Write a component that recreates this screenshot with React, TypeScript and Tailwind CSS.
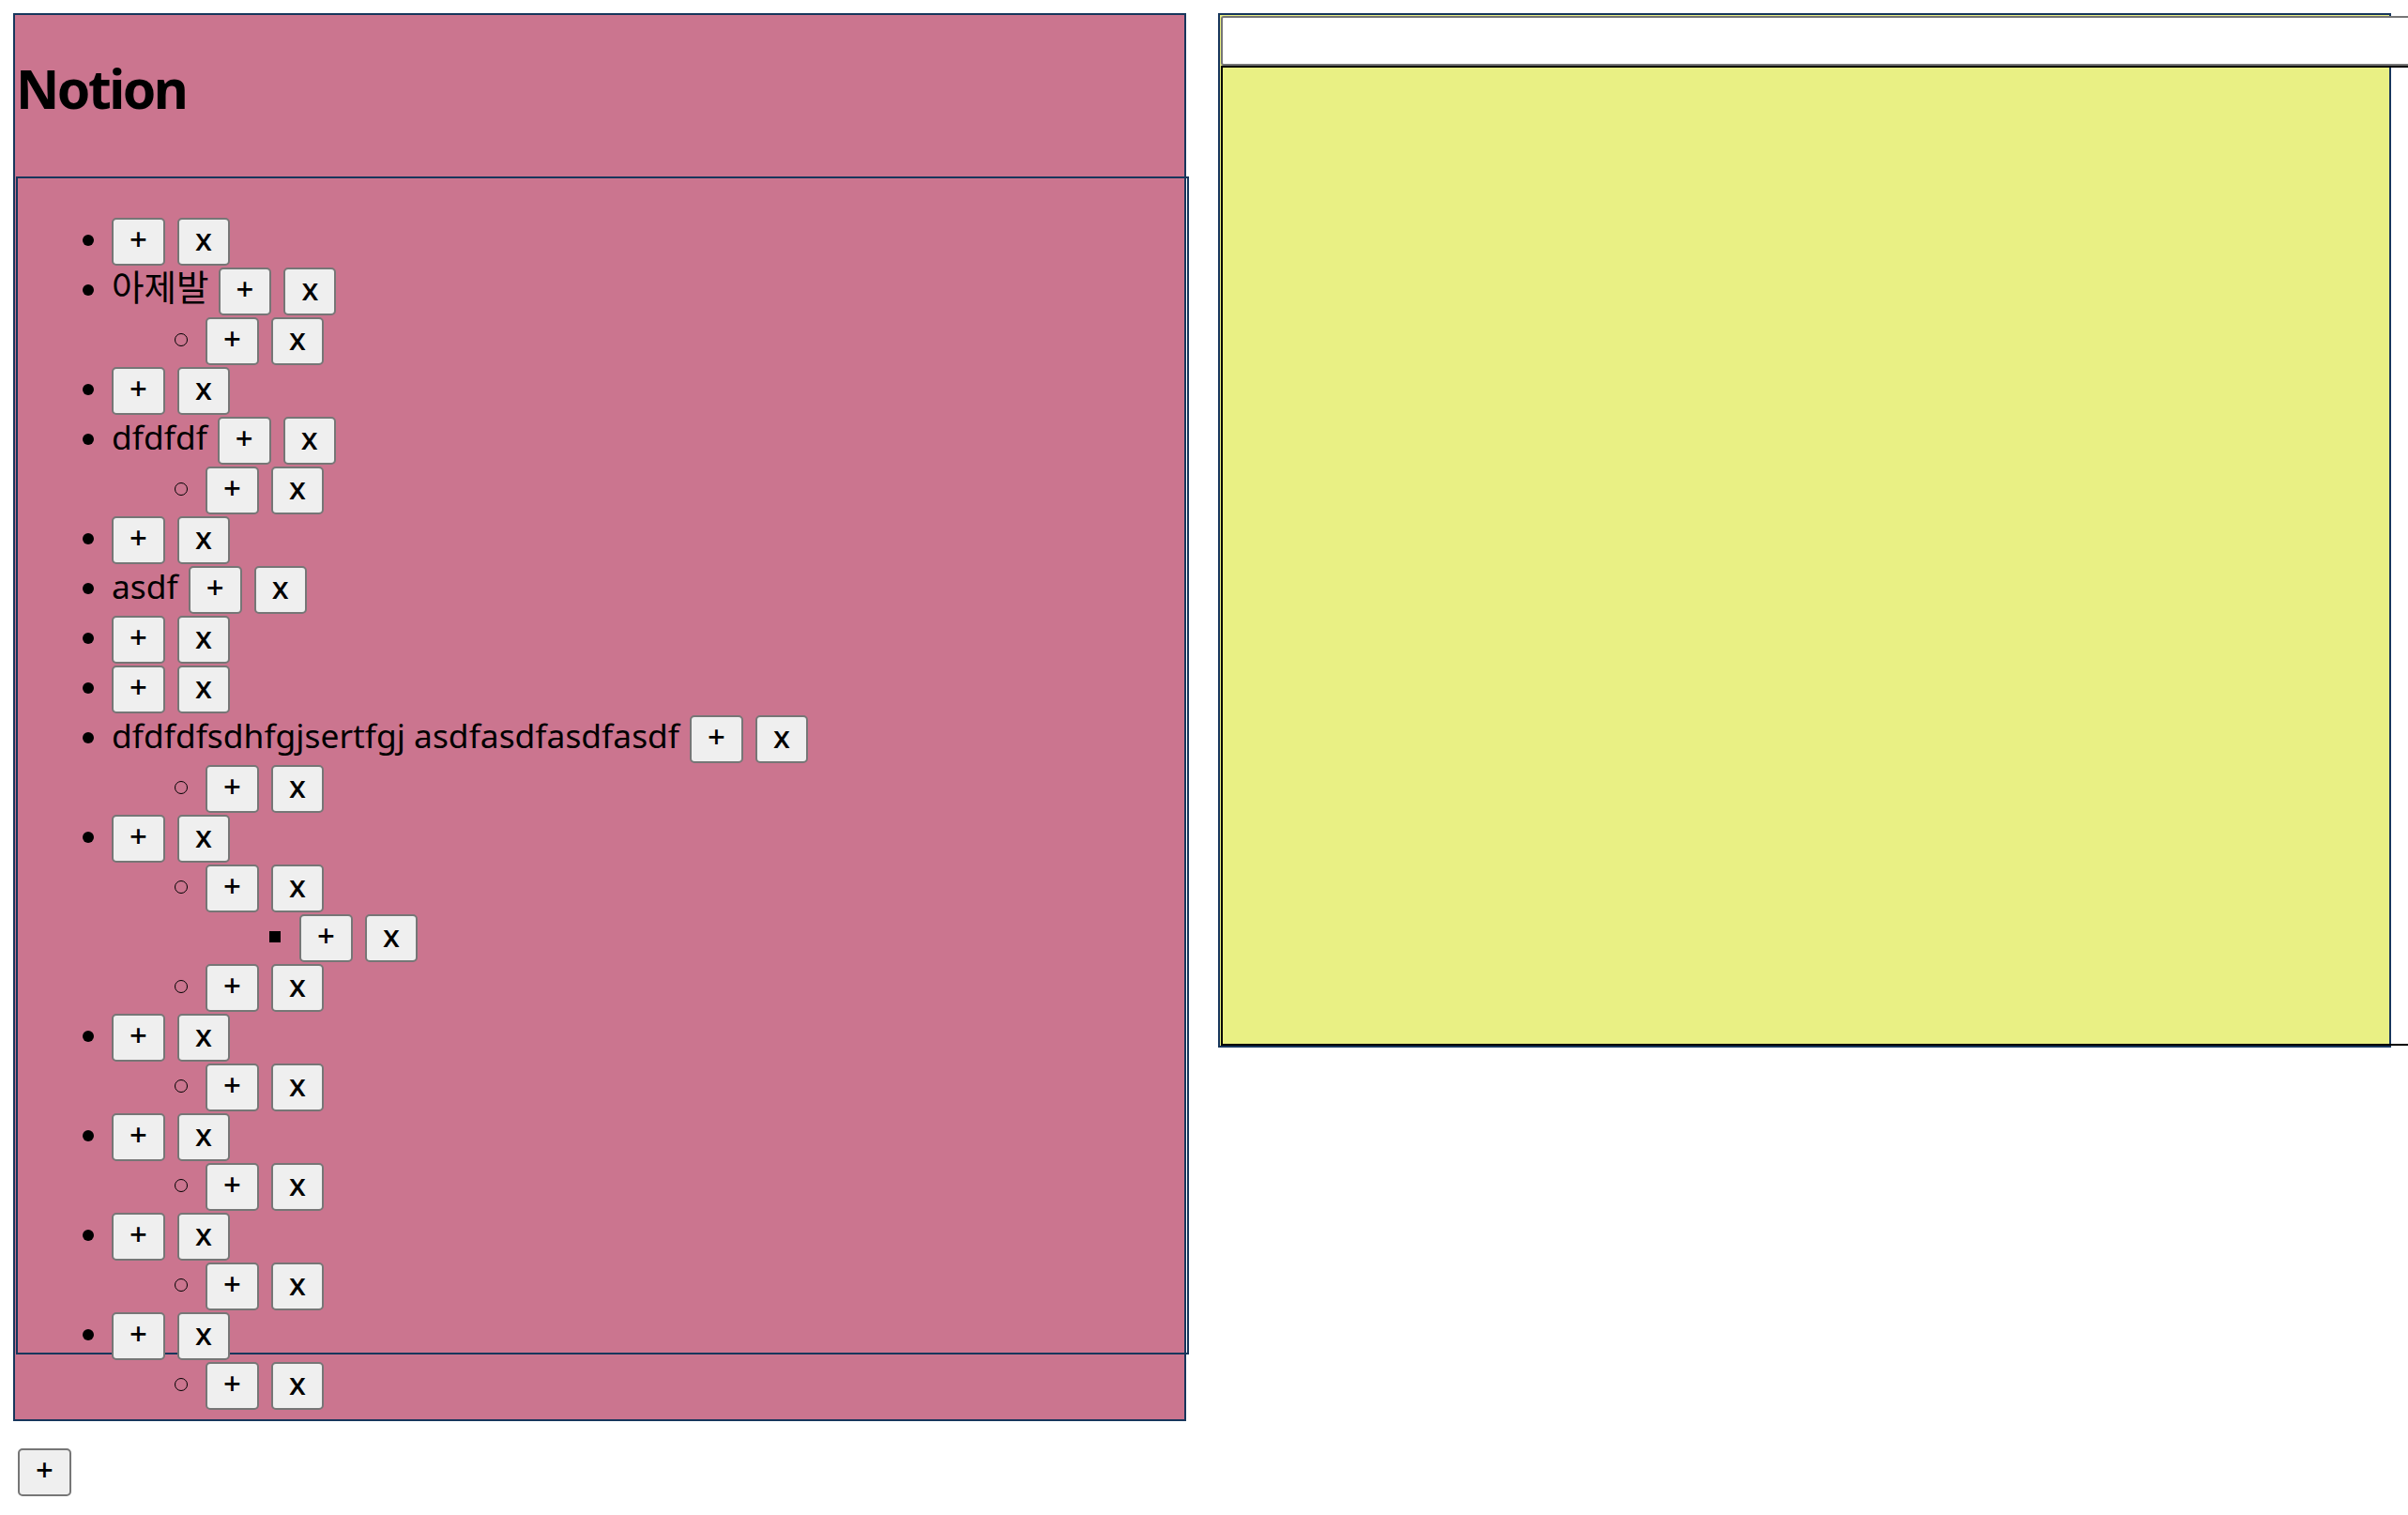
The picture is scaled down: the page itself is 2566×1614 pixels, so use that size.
import { useState } from "react";

type Page = {
  id: number;
  title: string;
  children: Page[];
};

let nextId = 0;
const page = (title = "", children: Page[] = []): Page => ({
  id: ++nextId,
  title,
  children,
});

const initialPages: Page[] = [
  page(),
  page("아제발", [page()]),
  page(),
  page("dfdfdf", [page()]),
  page(),
  page("asdf"),
  page(),
  page(),
  page("dfdfdfsdhfgjsertfgj asdfasdfasdfasdf", [page()]),
  page("", [page("", [page()]), page()]),
  page("", [page()]),
  page("", [page()]),
  page("", [page()]),
  page("", [page()]),
];

// disc / circle / square, like the default ul markers
const markers = [
  "mt-[18px] -ml-[31px] mr-[19px] h-[12px] w-[12px] rounded-full bg-black",
  "mt-[17px] -ml-[33px] mr-[19px] h-[14px] w-[14px] rounded-full border-[1.5px] border-black",
  "mt-[18px] -ml-[32px] mr-[20px] h-[12px] w-[12px] bg-black",
];

const btn =
  "h-[51px] shrink-0 rounded-[5px] border-2 border-[#767676] bg-[#efefef] px-[17px] pb-[5px] text-[33px] font-medium leading-[42px] text-black";

// hangul glyphs come out a bit small next to the latin ones
const isHangul = (s: string) => /[가-힣]/.test(s);

function addChild(list: Page[], id: number): Page[] {
  return list.map((p) =>
    p.id === id
      ? { ...p, children: [...p.children, page()] }
      : { ...p, children: addChild(p.children, id) },
  );
}

function removePage(list: Page[], id: number): Page[] {
  return list
    .filter((p) => p.id !== id)
    .map((p) => ({ ...p, children: removePage(p.children, id) }));
}

function PageList({
  pages,
  depth,
  onAdd,
  onDelete,
}: {
  pages: Page[];
  depth: number;
  onAdd: (id: number) => void;
  onDelete: (id: number) => void;
}) {
  return (
    <ul className="pl-[100px]">
      {pages.map((item) => (
        <li key={item.id}>
          <div className="flex h-[53px] items-baseline">
            <span className={`shrink-0 self-start ${markers[depth % 3]}`} />
            {item.title && (
              <span
                className={`whitespace-nowrap leading-none ${
                  isHangul(item.title)
                    ? "mr-[10px] text-[37.5px]"
                    : "mr-[11px] text-[35.4px]"
                }`}
              >
                {item.title}
              </span>
            )}
            <button onClick={() => onAdd(item.id)} className={btn}>
              +
            </button>
            <button
              onClick={() => onDelete(item.id)}
              className={`ml-[13px] ${btn}`}
            >
              x
            </button>
          </div>
          {item.children.length > 0 && (
            <PageList
              pages={item.children}
              depth={depth + 1}
              onAdd={onAdd}
              onDelete={onDelete}
            />
          )}
        </li>
      ))}
    </ul>
  );
}

export default function App() {
  const [pages, setPages] = useState<Page[]>(initialPages);
  const [content, setContent] = useState("");

  const handleAdd = (id: number) => setPages((prev) => addChild(prev, id));
  const handleDelete = (id: number) =>
    setPages((prev) => removePage(prev, id));

  return (
    <div className="flex min-h-screen items-start gap-[34px] overflow-hidden bg-white p-[14px] font-['Noto_Sans','Noto_Sans_CJK_KR',sans-serif] text-black">
      {/* sidebar */}
      <div className="shrink-0">
        <div className="h-[1500px] w-[1250px] border-2 border-[#17365c] bg-[#cb758f] pl-[1px] pt-[1px]">
          <div className="h-[171px] pt-[49px]">
            <h1 className="text-[57px] font-bold leading-none tracking-[-2.5px]">
              Notion
            </h1>
          </div>

          <div className="h-[1255px] w-[1250px] border-2 border-[#17365c] pt-[42px]">
            <PageList
              pages={pages}
              depth={0}
              onAdd={handleAdd}
              onDelete={handleDelete}
            />
          </div>
        </div>

        <button
          onClick={() => setPages((prev) => [...prev, page()])}
          className={`ml-[5px] mt-[29px] ${btn}`}
        >
          +
        </button>
      </div>

      {/* editor */}
      <div className="h-[1102px] w-[1250px] shrink-0 border-2 border-[#17365c] bg-[#e9f084] pl-[1px] pt-[1px]">
        <input
          value={content}
          onChange={(e) => setContent(e.target.value)}
          className="block h-[53px] w-[1300px] rounded-[3px] border-2 border-[#767676] bg-white px-2 text-[33px]"
        />
        <div className="h-[1044px] w-[1300px] border-2 border-black" />
      </div>
    </div>
  );
}
